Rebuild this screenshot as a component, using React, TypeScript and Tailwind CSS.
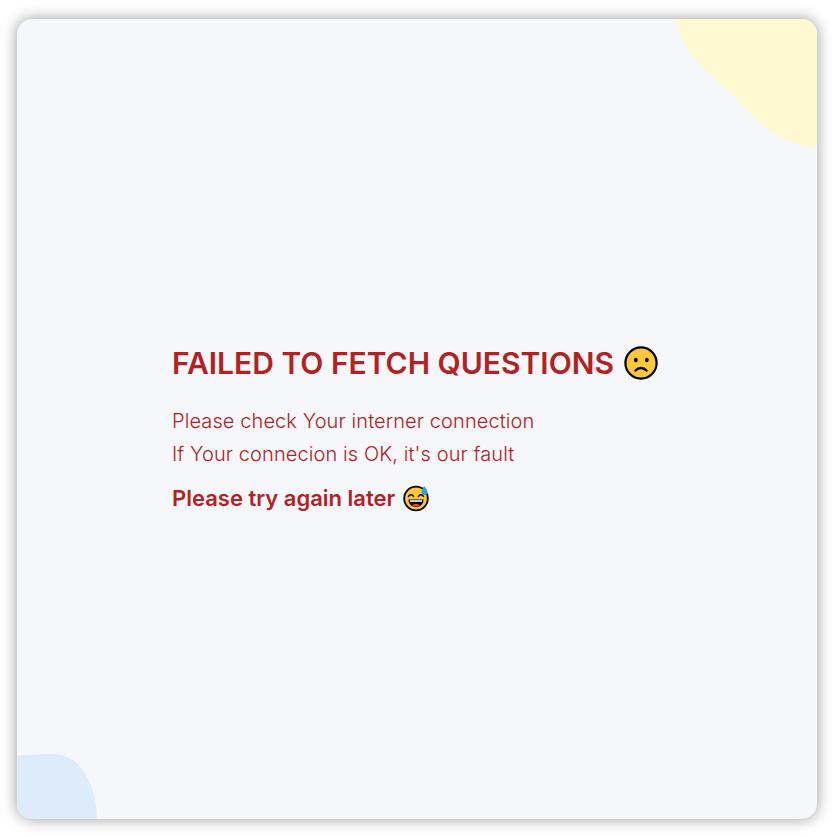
function SadFace() {
  return (
    <svg width="34" height="34" viewBox="0 0 34 34" className="shrink-0">
      <circle cx="17" cy="17" r="15.6" fill="#fec83c" stroke="#000" strokeWidth="2.2" />
      <ellipse cx="11.8" cy="14" rx="1.9" ry="2.2" fill="#000" />
      <ellipse cx="22.8" cy="14" rx="1.9" ry="2.2" fill="#000" />
      <path d="M11.500 24.500c3-3.400 8-3.400 11 0" fill="none" stroke="#000" strokeWidth="2.400" strokeLinecap="round" />
    </svg>
  );
}

function SweatGrin() {
  return (
    <svg width="28" height="28" viewBox="0 0 28 28" className="shrink-0">
      <circle cx="14" cy="14.500" r="11.800" fill="#fec83c" stroke="#000" strokeWidth="1.800" />
      <path d="M6.500 12.500c1-2.400 4-2.400 5 0M16.500 12.500c1-2.400 4-2.400 5 0" fill="none" stroke="#000" strokeWidth="1.500" strokeLinecap="round" />
      <path d="M6.500 15.500h15c0 4.800-3.300 7.500-7.500 7.500s-7.500-2.700-7.500-7.500z" fill="#000" />
      <path d="M8 16.200h12v1.600h-12z" fill="#fff" />
      <path d="M10 21.200c2-1.600 6-1.600 8 0-2.200 1.600-5.800 1.600-8 0z" fill="#ed4c30" />
      <path d="M22 2c1.500 2.200 3.500 3.800 3.500 6a3 3 0 0 1-6 0c0-2.200 1.500-3.800 2.500-6z" fill="#29a3e6" />
    </svg>
  );
}

export default function App() {
  return (
    <div className="w-[837px] h-[838px] pt-[19px] pl-[17px] bg-white font-['Inter',sans-serif]">
      <div className="relative w-[800px] h-[800px] pt-[22px] rounded-[15px] bg-[#f5f7fb] overflow-hidden shadow-[0_0_15px_rgba(0,0,0,0.4)] flex items-center justify-center">
        {/* corner blobs */}
        <svg className="absolute top-0 right-0" width="142" height="130" viewBox="0 0 142 130">
          <path d="M0 0H142V128C118 127 96 117 72 91C52 69 30 52 18 38C9 27 3 14 0 0Z" fill="#fff9d1" />
        </svg>
        <svg className="absolute bottom-0 left-0" width="80" height="65" viewBox="0 0 80 65">
          <path d="M0 2C10 1 20 0 32 0C46 0 56 4 64 14C74 27 80 44 80 65H0Z" fill="#deebf9" />
        </svg>

        <div className="w-[490px] text-[#b22222]">
          <h1 className="flex items-center gap-[10px] text-[30px] leading-[36px] font-semibold">
            FAILED TO FETCH QUESTIONS <SadFace />
          </h1>
          <p className="mt-[24px] text-[20px] leading-[33px] font-light tracking-[0.1px]">Please check Your interner connection</p>
          <p className="text-[20px] leading-[33px] font-light tracking-[0.1px]">If Your connecion is OK, it's our fault</p>
          <p className="mt-[9px] flex items-center gap-[7px] text-[22px] leading-[36px] font-semibold">
            Please try again later <SweatGrin />
          </p>
        </div>
      </div>
    </div>
  );
}
